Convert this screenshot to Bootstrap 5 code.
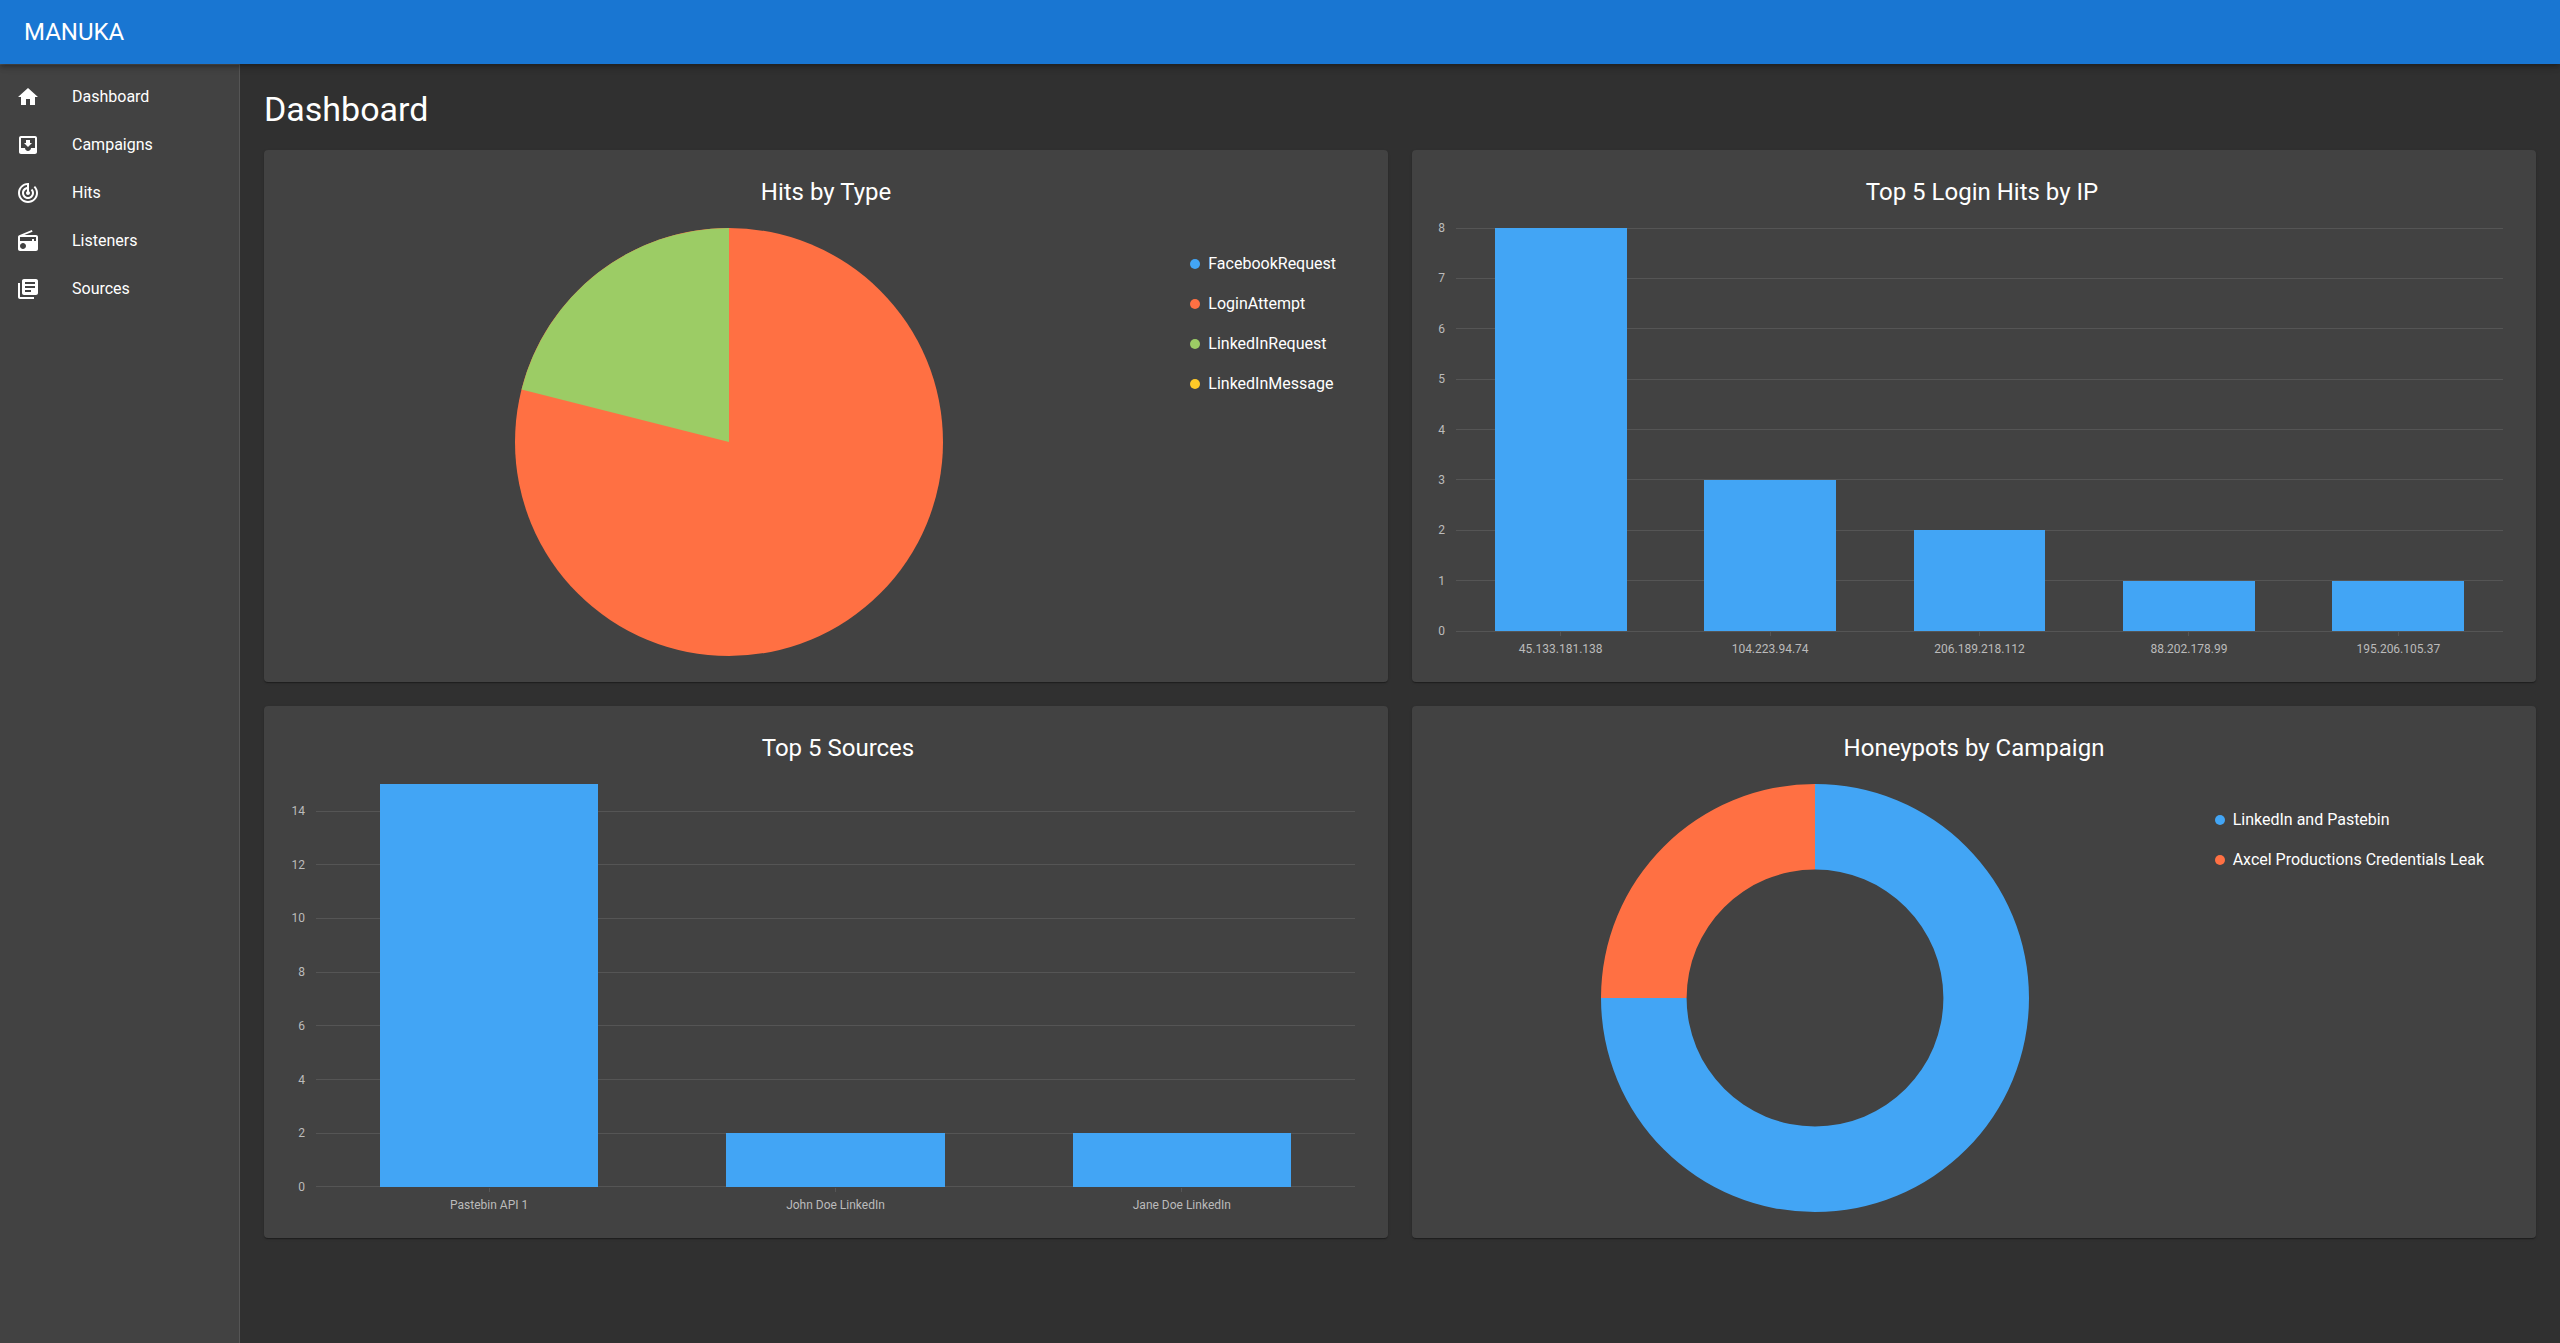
<!DOCTYPE html>
<html lang="en">
<head>
<meta charset="utf-8">
<meta name="viewport" content="width=device-width, initial-scale=1">
<title>Manuka</title>
<link href="https://cdn.jsdelivr.net/npm/bootstrap@5.3.0/dist/css/bootstrap.min.css" rel="stylesheet">
<style>
  :root { --paper: #424242; --line: #555; --blue: #42a5f5; --orange: #ff7043; --green: #9ccc65; --yellow: #ffca28; }
  body { background: #303030; color: #fff; font: 16px/24px Roboto, sans-serif; }
  .app-bar { height: 64px; background: #1976d2; z-index: 10; box-shadow: 0 2px 4px -1px rgba(0,0,0,.2), 0 4px 5px 0 rgba(0,0,0,.14), 0 1px 10px 0 rgba(0,0,0,.12); }
  .app-bar .navbar-brand { font-size: 24px; line-height: 32px; color: #fff; }
  .side-nav { width: 240px; background: var(--paper); border: solid var(--line); border-width: 1px 1px 0 0; }
  .side-nav .nav-link { height: 48px; color: #fff; gap: 32px; }
  .side-nav .nav-link:hover { background: #4d4d4d; }
  .side-nav svg { width: 24px; height: 24px; fill: #fff; }
  .page-title { font-size: 34px; line-height: 42px; margin-bottom: 20px; font-weight: 400; }
  .panel { background: var(--paper); border-radius: 4px; min-height: 532px; box-shadow: 0 2px 1px -1px rgba(0,0,0,.2), 0 1px 1px 0 rgba(0,0,0,.14), 0 1px 3px 0 rgba(0,0,0,.12); }
  .panel-title { font-size: 24px; line-height: 32px; font-weight: 400; margin: 0; padding: 26px 0 20px var(--axis, 0); }

  /* --axis is the width of the scale's numbers, --top the space above the highest line */
  .one-digit { --axis: 16px; --top: 0px; }
  .two-digit { --axis: 24px; --top: 27px; }

  /* bar charts: scale and bars share one grid cell */
  .bars { display: grid; grid-template-columns: 100%; padding: 0 33px 0 16px; font-size: 12px; color: #bbb; }
  .scale, .columns { grid-area: 1 / 1; }
  .scale { margin: calc(var(--top) - 10px) 0 -10px; }
  .tick { height: 20px; line-height: 20px; gap: 11px; }
  .tick span { width: calc(var(--axis) + 1px); text-align: right; }
  .tick i { height: 1px; background: var(--line); }
  .columns { height: 403px; }
  .columns, .names { margin-left: calc(var(--axis) + 12px); }
  .slot { flex: 1 1 0; }
  .columns .slot > div { width: 63%; background: var(--blue); }
  .names { line-height: 16px; }
  .names .slot::before { content: ""; display: block; width: 1px; height: 4px; margin: 1px auto 5px; background: var(--line); }

  /* pie charts */
  .pie-pane { padding-left: 4px; }
  .pie-pane svg { width: 428px; height: 428px; }
  .legend-list { padding: 24px 52px 0 0; gap: 16px; }
  .legend-list li { gap: 8px; }
  .dot { width: 10px; height: 10px; border-radius: 50%; }
  .dot-blue { background: var(--blue); }
  .dot-orange { background: var(--orange); }
  .dot-green { background: var(--green); }
  .dot-yellow { background: var(--yellow); }
</style>
<script src="https://cdn.jsdelivr.net/npm/bootstrap@5.3.0/dist/js/bootstrap.bundle.min.js"></script>
</head>
<body class="d-flex flex-column min-vh-100">
<header class="navbar app-bar p-0 px-4 position-relative">
  <a class="navbar-brand m-0 p-0" href="#">MANUKA</a>
</header>
<div class="d-flex flex-grow-1">
  <nav class="side-nav flex-shrink-0 pt-2" aria-label="Main">
    <ul class="nav flex-column">
      <li><a class="nav-link d-flex align-items-center py-0 px-3" href="#"><svg viewBox="0 0 24 24"><path d="M10 20v-6h4v6h5v-8h3L12 3 2 12h3v8z"/></svg>Dashboard</a></li>
      <li><a class="nav-link d-flex align-items-center py-0 px-3" href="#"><svg viewBox="0 0 24 24"><path d="M19 3H4.99c-1.11 0-1.98.9-1.98 2L3 19c0 1.1.88 2 1.99 2H19c1.1 0 2-.9 2-2V5c0-1.1-.9-2-2-2zm0 12h-4c0 1.66-1.35 3-3 3s-3-1.34-3-3H4.99V5H19v10zm-3-5h-2V7h-4v3H8l4 4 4-4z"/></svg>Campaigns</a></li>
      <li><a class="nav-link d-flex align-items-center py-0 px-3" href="#"><svg viewBox="0 0 24 24"><path d="M19.07 4.93l-1.41 1.41C19.1 7.79 20 9.79 20 12c0 4.42-3.58 8-8 8s-8-3.58-8-8c0-4.08 3.05-7.44 7-7.93v2.02C8.16 6.57 6 9.03 6 12c0 3.31 2.69 6 6 6s6-2.69 6-6c0-1.66-.67-3.16-1.76-4.24l-1.41 1.41C15.55 9.9 16 10.9 16 12c0 2.21-1.79 4-4 4s-4-1.79-4-4c0-1.86 1.28-3.41 3-3.86v2.14c-.6.35-1 .98-1 1.72 0 1.1.9 2 2 2s2-.9 2-2c0-.74-.4-1.38-1-1.72V2h-1C6.48 2 2 6.48 2 12s4.48 10 10 10 10-4.48 10-10c0-2.76-1.12-5.26-2.93-7.07z"/></svg>Hits</a></li>
      <li><a class="nav-link d-flex align-items-center py-0 px-3" href="#"><svg viewBox="0 0 24 24"><path d="M3.24 6.15C2.51 6.43 2 7.17 2 8v12c0 1.1.89 2 2 2h16c1.11 0 2-.9 2-2V8c0-1.11-.89-2-2-2H8.3l8.26-3.34L15.88 1 3.24 6.15zM7 20c-1.66 0-3-1.34-3-3s1.34-3 3-3 3 1.34 3 3-1.34 3-3 3zm13-8h-2v-2h-2v2H4V8h16v4z"/></svg>Listeners</a></li>
      <li><a class="nav-link d-flex align-items-center py-0 px-3" href="#"><svg viewBox="0 0 24 24"><path d="M4 6H2v14c0 1.1.9 2 2 2h14v-2H4V6zm16-4H8c-1.1 0-2 .9-2 2v12c0 1.1.9 2 2 2h12c1.1 0 2-.9 2-2V4c0-1.1-.9-2-2-2zm-1 9H9V9h10v2zm-4 4H9v-2h6v2zm4-8H9V5h10v2z"/></svg>Sources</a></li>
    </ul>
  </nav>
  <main class="flex-grow-1 p-4">
    <h1 class="page-title">Dashboard</h1>
    <div class="row g-4">
      <div class="col-6">
        <section class="panel">
          <h2 class="panel-title text-center">Hits by Type</h2>
          <div class="d-flex">
            <div class="pie-pane flex-grow-1 d-flex justify-content-center">
              <svg viewBox="-214 -214 428 428" role="img" aria-label="Hits by Type">
                <circle r="214" fill="#ff7043"/>
                <path d="M0 0V-214A214 214 0 0 0 -207.46 -52.53Z" fill="#9ccc65"/>
              </svg>
            </div>
            <ul class="legend-list list-unstyled d-flex flex-column m-0">
              <li class="d-flex align-items-center"><span class="dot dot-blue"></span>FacebookRequest</li>
              <li class="d-flex align-items-center"><span class="dot dot-orange"></span>LoginAttempt</li>
              <li class="d-flex align-items-center"><span class="dot dot-green"></span>LinkedInRequest</li>
              <li class="d-flex align-items-center"><span class="dot dot-yellow"></span>LinkedInMessage</li>
            </ul>
          </div>
        </section>
      </div>
      <div class="col-6">
        <section class="panel one-digit">
          <h2 class="panel-title text-center">Top 5 Login Hits by IP</h2>
          <div class="bars">
            <div class="scale d-flex flex-column justify-content-between">
              <div class="tick d-flex align-items-center"><span>8</span><i class="flex-grow-1"></i></div>
              <div class="tick d-flex align-items-center"><span>7</span><i class="flex-grow-1"></i></div>
              <div class="tick d-flex align-items-center"><span>6</span><i class="flex-grow-1"></i></div>
              <div class="tick d-flex align-items-center"><span>5</span><i class="flex-grow-1"></i></div>
              <div class="tick d-flex align-items-center"><span>4</span><i class="flex-grow-1"></i></div>
              <div class="tick d-flex align-items-center"><span>3</span><i class="flex-grow-1"></i></div>
              <div class="tick d-flex align-items-center"><span>2</span><i class="flex-grow-1"></i></div>
              <div class="tick d-flex align-items-center"><span>1</span><i class="flex-grow-1"></i></div>
              <div class="tick d-flex align-items-center"><span>0</span><i class="flex-grow-1"></i></div>
            </div>
            <div class="columns d-flex">
              <div class="slot d-flex align-items-end justify-content-center"><div style="height:100%"></div></div>
              <div class="slot d-flex align-items-end justify-content-center"><div style="height:37.5%"></div></div>
              <div class="slot d-flex align-items-end justify-content-center"><div style="height:25%"></div></div>
              <div class="slot d-flex align-items-end justify-content-center"><div style="height:12.5%"></div></div>
              <div class="slot d-flex align-items-end justify-content-center"><div style="height:12.5%"></div></div>
            </div>
            <div class="names d-flex text-center">
              <div class="slot">45.133.181.138</div>
              <div class="slot">104.223.94.74</div>
              <div class="slot">206.189.218.112</div>
              <div class="slot">88.202.178.99</div>
              <div class="slot">195.206.105.37</div>
            </div>
          </div>
        </section>
      </div>
      <div class="col-6">
        <section class="panel two-digit">
          <h2 class="panel-title text-center">Top 5 Sources</h2>
          <div class="bars">
            <div class="scale d-flex flex-column justify-content-between">
              <div class="tick d-flex align-items-center"><span>14</span><i class="flex-grow-1"></i></div>
              <div class="tick d-flex align-items-center"><span>12</span><i class="flex-grow-1"></i></div>
              <div class="tick d-flex align-items-center"><span>10</span><i class="flex-grow-1"></i></div>
              <div class="tick d-flex align-items-center"><span>8</span><i class="flex-grow-1"></i></div>
              <div class="tick d-flex align-items-center"><span>6</span><i class="flex-grow-1"></i></div>
              <div class="tick d-flex align-items-center"><span>4</span><i class="flex-grow-1"></i></div>
              <div class="tick d-flex align-items-center"><span>2</span><i class="flex-grow-1"></i></div>
              <div class="tick d-flex align-items-center"><span>0</span><i class="flex-grow-1"></i></div>
            </div>
            <div class="columns d-flex">
              <div class="slot d-flex align-items-end justify-content-center"><div style="height:100%"></div></div>
              <div class="slot d-flex align-items-end justify-content-center"><div style="height:13.333%"></div></div>
              <div class="slot d-flex align-items-end justify-content-center"><div style="height:13.333%"></div></div>
            </div>
            <div class="names d-flex text-center">
              <div class="slot">Pastebin API 1</div>
              <div class="slot">John Doe LinkedIn</div>
              <div class="slot">Jane Doe LinkedIn</div>
            </div>
          </div>
        </section>
      </div>
      <div class="col-6">
        <section class="panel">
          <h2 class="panel-title text-center">Honeypots by Campaign</h2>
          <div class="d-flex">
            <div class="pie-pane flex-grow-1 d-flex justify-content-center">
              <svg viewBox="-214 -214 428 428" role="img" aria-label="Honeypots by Campaign">
                <path d="M0 -214A214 214 0 1 1 -214 0H-128.4A128.4 128.4 0 1 0 0 -128.4Z" fill="#42a5f5"/>
                <path d="M-214 0A214 214 0 0 1 0 -214V-128.4A128.4 128.4 0 0 0 -128.4 0Z" fill="#ff7043"/>
              </svg>
            </div>
            <ul class="legend-list list-unstyled d-flex flex-column m-0">
              <li class="d-flex align-items-center"><span class="dot dot-blue"></span>LinkedIn and Pastebin</li>
              <li class="d-flex align-items-center"><span class="dot dot-orange"></span>Axcel Productions Credentials Leak</li>
            </ul>
          </div>
        </section>
      </div>
    </div>
  </main>
</div>
</body>
</html>
